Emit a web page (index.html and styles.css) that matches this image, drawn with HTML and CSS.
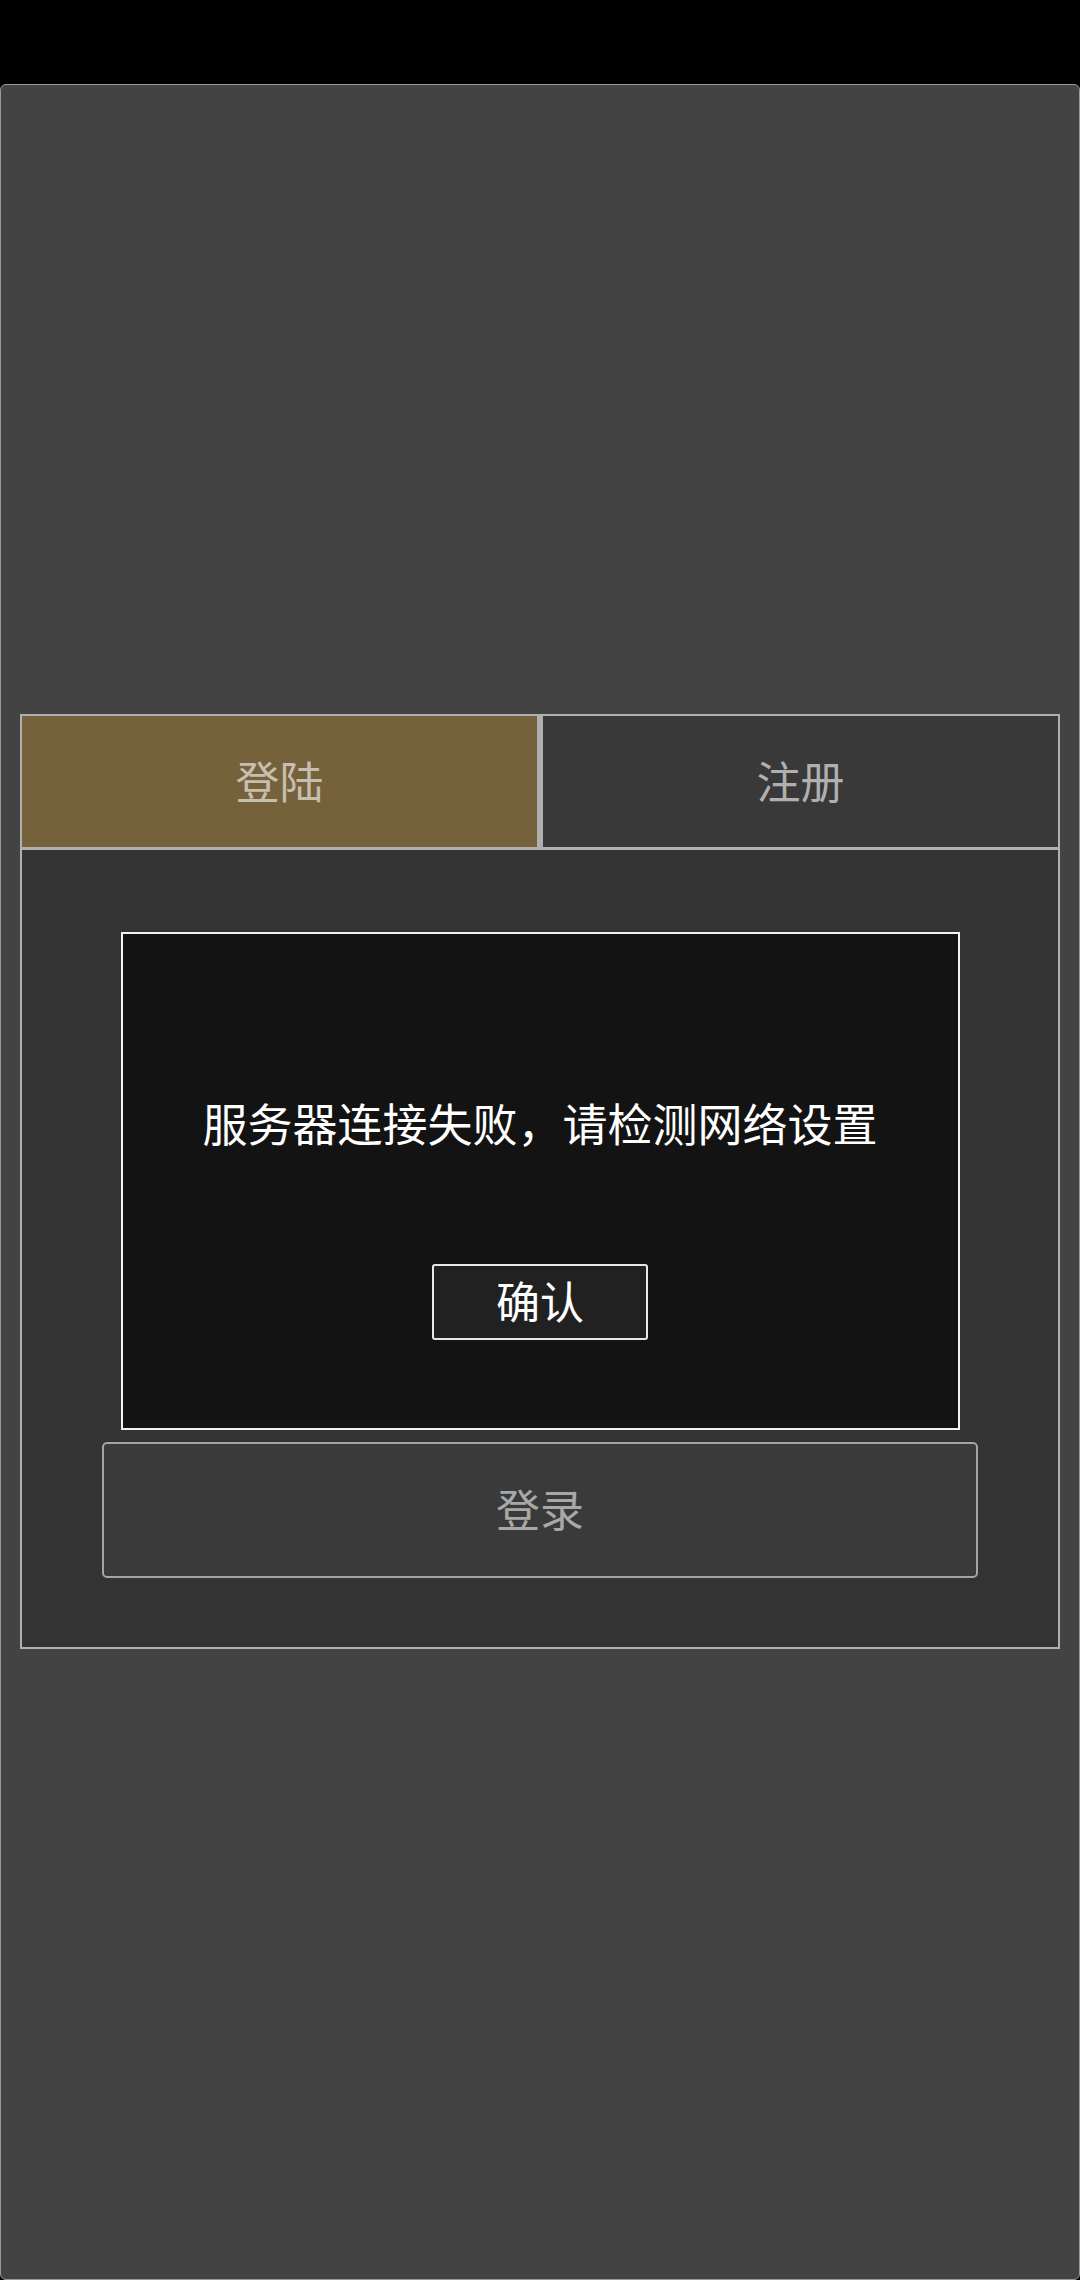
FILE: index.html
```html
<!DOCTYPE html>
<html lang="zh-CN">
<head>
<meta charset="utf-8">
<title>登陆</title>
<link rel="stylesheet" href="styles.css">
</head>
<body>
<div class="statusbar"></div>
<main class="panel">
  <section class="card">
    <div class="tabs">
      <div class="tab tab-active">登陆</div>
      <div class="tab">注册</div>
    </div>
    <div class="content">
      <div class="dialog">
        <p class="dialog-msg">服务器连接失败，请检测网络设置</p>
        <button class="dialog-btn">确认</button>
      </div>
      <button class="login-btn">登录</button>
    </div>
  </section>
</main>
</body>
</html>
```
FILE: styles.css
```css
* { box-sizing: border-box; }
html, body {
  margin: 0;
  padding: 0;
  background: #000;
  font-family: "Noto Sans CJK SC", "Noto Sans", sans-serif;
}
.statusbar {
  height: 84px;
  background: #000;
}
.panel {
  height: 2196px;
  background: #434343;
  border: 1px solid #9a9a9a;
  border-radius: 6px;
  padding: 629px 20px 0 19px;
}
.card {
  width: 1040px;
}
.tabs {
  display: grid;
  grid-template-columns: 1fr 1fr;
  height: 136px;
}
.tab {
  display: flex;
  align-items: center;
  justify-content: center;
  border-top: 2px solid #b0b0b0;
  border-bottom: 3px solid #b0b0b0;
  border-left: 2px solid #b0b0b0;
  border-right: 3px solid #b0b0b0;
  background: #393939;
  color: #b0b0b0;
  font-size: 44px;
  line-height: 1;
  padding-bottom: 4px;
}
.tab + .tab {
  border-left: 3px solid #b0b0b0;
  border-right: 2px solid #b0b0b0;
}
.tab-active {
  background: #75623b;
  color: #c6beb0;
}
.content {
  background: #333333;
  border: 2px solid #b0b0b0;
  border-top: none;
  height: 799px;
  display: flex;
  flex-direction: column;
  align-items: center;
  padding-top: 82px;
}
.dialog {
  width: 839px;
  height: 498px;
  background: #131313;
  border: 2px solid #f2f2f2;
  display: flex;
  flex-direction: column;
  align-items: center;
  padding-top: 162px;
}
.dialog-msg {
  margin: 0;
  color: #ffffff;
  font-size: 45px;
  line-height: 54px;
  white-space: nowrap;
}
.dialog-btn {
  margin-top: 114px;
  width: 216px;
  height: 76px;
  background: #212121;
  border: 2px solid #e8e8e8;
  border-radius: 3px;
  color: #ffffff;
  font-family: inherit;
  font-size: 44px;
  line-height: 1;
  padding: 0 0 4px 0;
}
.login-btn {
  margin-top: 12px;
  width: 876px;
  height: 136px;
  background: #3a3a3a;
  border: 2px solid #a4a4a4;
  border-radius: 5px;
  color: #a8a8a8;
  font-family: inherit;
  font-size: 44px;
  line-height: 1;
  padding: 0 0 4px 0;
}
```
